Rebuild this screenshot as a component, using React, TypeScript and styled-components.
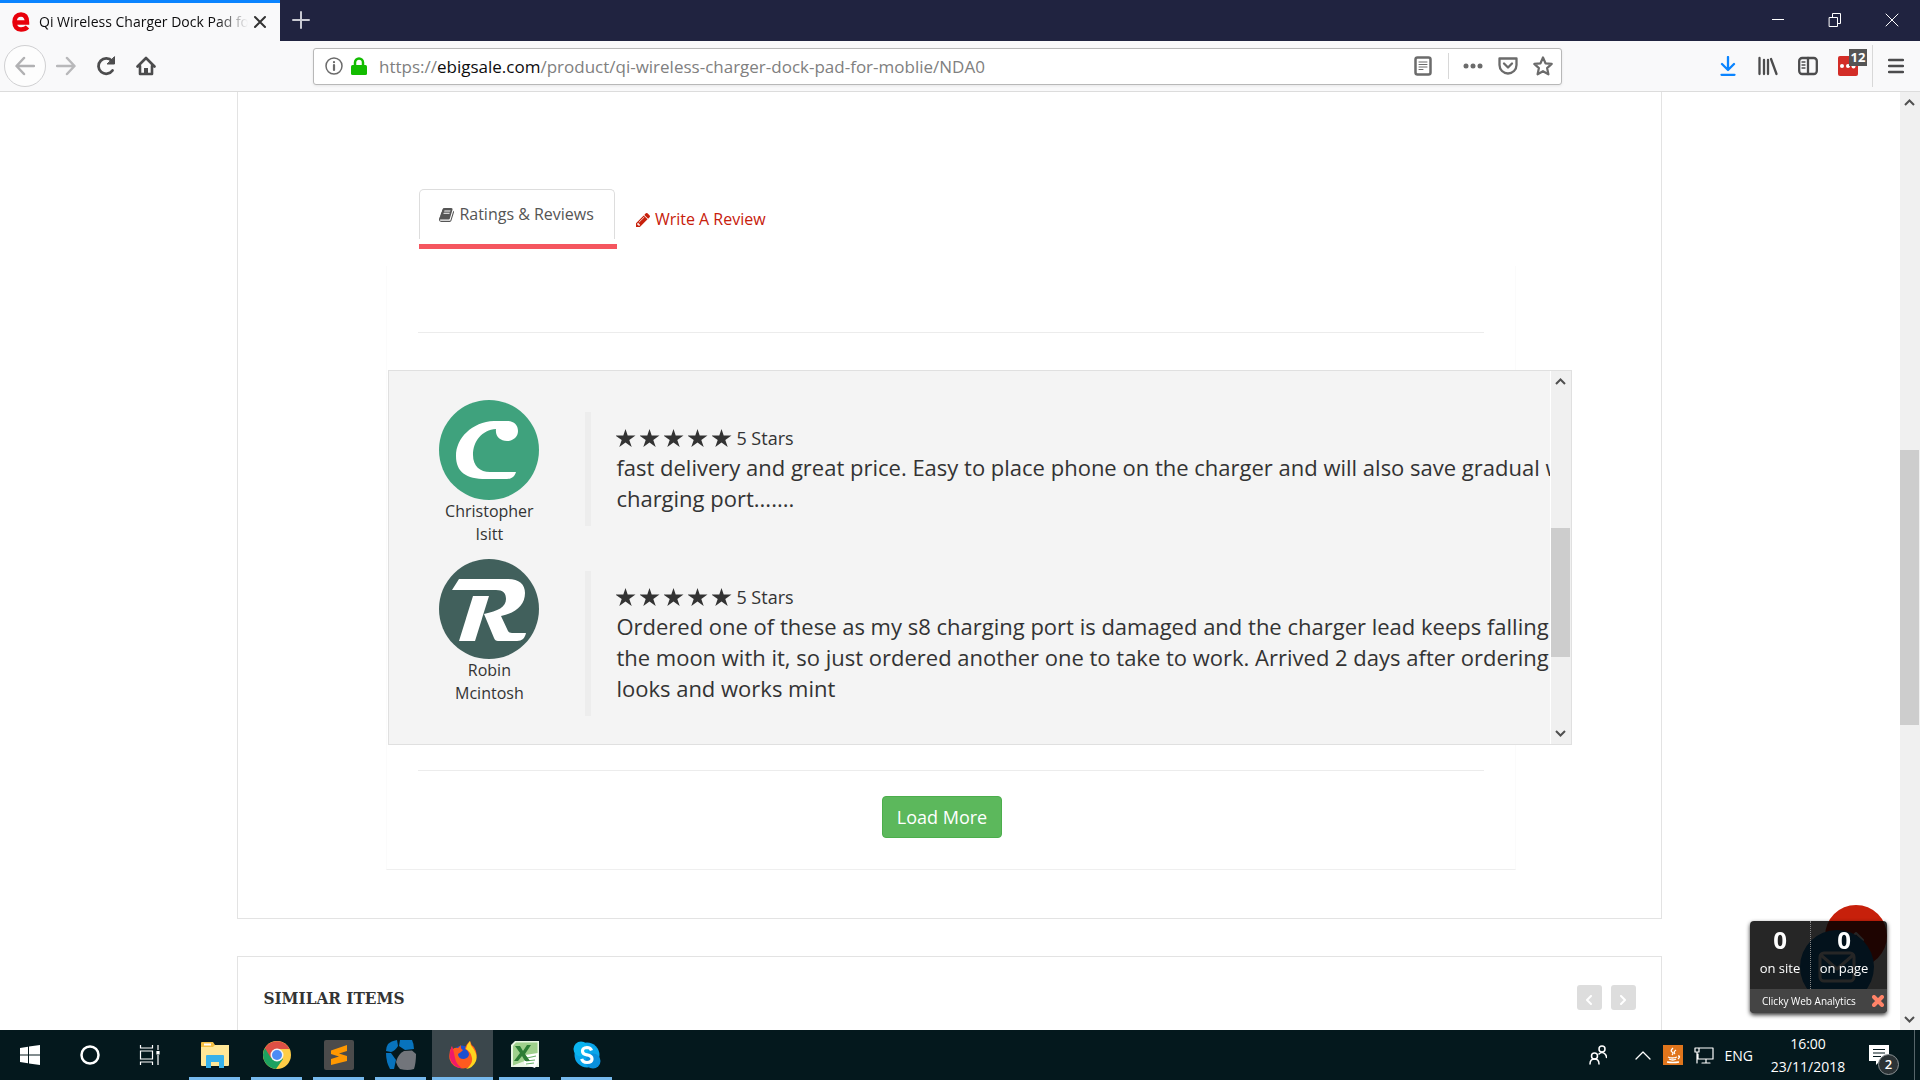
import React from "react";
import styled, { createGlobalStyle, css } from "styled-components";

const ui = `"Open Sans", "Noto Sans", sans-serif`;

const GlobalStyle = createGlobalStyle`
  *, *::before, *::after { box-sizing: border-box; }
  body { margin: 0; background: #fff; font-family: ${ui}; color: #333; }
  button, input { font-family: inherit; }
  svg { display: block; flex: none; }
`;

const Desktop = styled.div`
  height: 100vh;
  display: flex;
  flex-direction: column;
  overflow: hidden;
`;

/* ---------- browser chrome ---------- */

const TitleBar = styled.header`
  display: flex;
  align-items: stretch;
  height: 41px;
  flex: none;
  background: #202340;
`;

const BrowserTab = styled.div`
  display: flex;
  align-items: center;
  width: 280px;
  padding: 0 10px 0 12px;
  border-top: 3px solid #0a84ff;
  background: #f9f9fa;
`;

const TabTitle = styled.span`
  flex: 1;
  margin: 0 2px 0 9px;
  overflow: hidden;
  white-space: nowrap;
  font-size: 14px;
  line-height: 24px;
  color: #0c0c0d;
  mask-image: linear-gradient(to right, #000 85%, transparent);
`;

const IconButton = styled.button<{ $w?: number; $h?: number; $ring?: boolean }>`
  display: flex;
  align-items: center;
  justify-content: center;
  flex: none;
  width: ${(p) => p.$w ?? 40}px;
  height: ${(p) => p.$h ?? 40}px;
  padding: 0;
  border: ${(p) => (p.$ring ? "1px solid #d0d0d2" : "0")};
  border-radius: ${(p) => (p.$ring ? "50%" : "0")};
  background: ${(p) => (p.$ring ? "#fdfdfd" : "transparent")};
  color: inherit;
`;

const WindowButtons = styled.div`
  display: flex;
  margin-left: auto;
  color: #fff;
`;

const NavBar = styled.nav`
  display: flex;
  align-items: center;
  height: 51px;
  flex: none;
  padding: 0 1px 0 4px;
  background: #f9f9fa;
  border-bottom: 1px solid #dcdcdc;
  color: #4c4c4d;
`;

const NavGroup = styled.div`
  display: flex;
  align-items: center;
`;

const AddressBar = styled.div`
  display: flex;
  align-items: center;
  flex: 0 1 1249px;
  height: 37px;
  margin-left: 147px;
  padding: 0 2px 0 11px;
  gap: 8px;
  border: 1px solid #b8b8b8;
  border-radius: 3px;
  background: #fff;
  box-shadow: 0 1px 3px rgba(0, 0, 0, 0.08);
  color: #6b6b6b;
`;

const Url = styled.div`
  flex: 1;
  padding: 2px 0 0 4px;
  font-size: 17px;
  line-height: 24px;
  white-space: nowrap;
  color: #808080;
  b { font-weight: 400; color: #0c0c0d; }
`;

const Rule = styled.span<{ $h: number; $before?: number }>`
  width: 1px;
  height: ${(p) => p.$h}px;
  margin-left: ${(p) => p.$before ?? 0}px;
  background: #d8d8d8;
`;

const ToolButtons = styled(NavGroup)`
  margin-left: auto;
`;

const Extension = styled.span`
  position: relative;
  display: flex;
`;

const ExtBadge = styled.span`
  position: absolute;
  top: -7px;
  left: 11px;
  width: 18px;
  height: 17px;
  background: #555;
  color: #fff;
  font-size: 13px;
  font-weight: 700;
  line-height: 17px;
  text-align: center;
`;

/* ---------- page ---------- */

const Viewport = styled.div`
  display: flex;
  flex: 1;
  min-height: 0;
  background: #fff;
`;

const Page = styled.main`
  flex: 1;
  min-width: 0;
  overflow: hidden;
  padding-right: 1px;
`;

const ScrollTrack = styled.div<{ $edge?: boolean }>`
  display: flex;
  flex-direction: column;
  flex: none;
  justify-content: space-between;
  width: ${(p) => (p.$edge ? 21 : 20)}px;
  background: #f0f0f0;
  border-left: ${(p) => (p.$edge ? "1px solid #fff" : "0")};
  color: #505050;
`;

const ScrollThumb = styled.div<{ $h: number; $before: number; $after: number }>`
  flex: 1;
  display: flex;
  flex-direction: column;
  &::before { content: ""; flex: ${(p) => p.$before}; }
  &::after { content: ""; flex: ${(p) => p.$after}; }
  span { height: ${(p) => p.$h}px; margin-right: 1px; background: #cdcdcd; }
`;

const Card = styled.section<{ $first?: boolean }>`
  width: 75%;
  margin: 0 auto 37px;
  border: 1px solid #e3e3e3;
  ${(p) =>
    p.$first
      ? css`
          border-top: 0;
          padding: 97px 145px 48px 148px;
        `
      : css`
          padding: 28px 25px;
          height: 160px;
        `}
`;

const Tabs = styled.div`
  display: flex;
  align-items: flex-start;
  padding-left: 33px;
`;

const ActiveTab = styled.div`
  border-bottom: 5px solid #f5565f;
`;

const TabLink = styled.a<{ $active?: boolean }>`
  display: flex;
  align-items: center;
  gap: 5px;
  font-size: 16px;
  line-height: 23px;
  text-decoration: none;
  color: ${(p) => (p.$active ? "#555" : "#c7200b")};
  ${(p) =>
    p.$active
      ? css`
          height: 50px;
          margin: 0 2px 5px 0;
          padding: 0 20px 0 19px;
          border: 1px solid #ddd;
          border-bottom: 0;
          border-radius: 5px 5px 0 0;
        `
      : css`
          margin: 19px 0 0 19px;
        `}
`;

const Panel = styled.div`
  margin-top: 17px;
  padding-top: 66px;
  border: 1px solid #fbfbfb;
  border-top: 0;
  border-bottom-color: #efefef;
`;

const Line = styled.hr`
  height: 1px;
  margin: 0 31px;
  border: 0;
  background: #ececec;
`;

const ReviewBox = styled.div`
  display: flex;
  height: 375px;
  margin: 37px -57px 25px 1px;
  border: 1px solid #e0e0e0;
  background: #f4f4f4;
`;

const ReviewList = styled.div`
  flex: 1;
  min-width: 0;
  overflow: hidden;
  padding: 29px 0 0 50px;
`;

const Review = styled.article`
  display: flex;
  align-items: flex-start;
  height: 159px;
`;

const Reviewer = styled.div`
  width: 100px;
  flex: none;
  font-size: 16px;
  line-height: 23px;
  text-align: center;
`;

const ReviewBody = styled.div<{ $lines: number }>`
  margin: 12px 0 0 46px;
  padding: 12px 0 0 25px;
  height: ${(p) => 52 + p.$lines * 31}px;
  border-left: 6px solid #ededed;
  white-space: nowrap;
`;

const Rating = styled.div`
  display: flex;
  align-items: center;
  gap: 4px;
  height: 28px;
  font-size: 18px;
  line-height: 26px;
`;

const Stars = styled.span`
  display: flex;
  gap: 4px;
  color: #333;
`;

const ReviewText = styled.p`
  margin: 0;
  font-size: 22px;
  line-height: 31px;
`;

const LoadRow = styled.div`
  display: flex;
  justify-content: center;
  padding: 25px 18px 31px 0;
`;

const LoadMore = styled.button`
  height: 42px;
  padding: 0 14px;
  border: 1px solid #4cae4c;
  border-radius: 4px;
  background: #5cb85c;
  color: #fff;
  font-size: 18px;
  line-height: 26px;
`;

const SimilarHead = styled.div`
  display: flex;
  justify-content: space-between;
  align-items: flex-start;
  h2 {
    margin: 0;
    font: 700 17px/26px "DejaVu Serif Condensed", "DejaVu Serif", serif;
    color: #333;
  }
`;

const Pager = styled.div`
  display: flex;
  gap: 9px;
`;

const PagerButton = styled.button`
  display: flex;
  align-items: center;
  justify-content: center;
  width: 25px;
  height: 25px;
  padding: 4px 0 0;
  border: 0;
  border-radius: 3px;
  background: #ddd;
  color: #fff;
`;

/* ---------- floating widgets ---------- */

const FloatCircle = styled.button<{ $size: number; $right: number; $bottom: number; $color: string }>`
  position: fixed;
  display: flex;
  align-items: center;
  justify-content: center;
  right: ${(p) => p.$right}px;
  bottom: ${(p) => p.$bottom}px;
  width: ${(p) => p.$size}px;
  height: ${(p) => p.$size}px;
  padding: 0;
  border: 0;
  border-radius: 50%;
  background: ${(p) => p.$color};
  color: #fff;
`;

const Clicky = styled.aside`
  position: fixed;
  right: 33px;
  bottom: 67px;
  width: 137px;
  overflow: hidden;
  border-radius: 4px;
  background: rgba(0, 0, 0, 0.85);
  box-shadow: 0 2px 4px rgba(0, 0, 0, 0.8);
  color: #fff;
`;

const Counts = styled.div`
  display: grid;
  grid-template-columns: 60px 1fr;
  height: 68px;
  text-align: center;
`;

const Count = styled.div<{ $divided?: boolean }>`
  padding: 5px ${(p) => (p.$divided ? 10 : 0)}px 0 0;
  border-left: ${(p) => (p.$divided ? "1px dotted #888" : "0")};
  font-size: 13px;
  line-height: 28px;
  white-space: nowrap;
  strong { display: block; font-size: 24px; }
`;

const ClickyFoot = styled.div`
  display: flex;
  align-items: center;
  justify-content: space-between;
  height: 24px;
  padding: 0 3px 0 12px;
  background: #444;
  font-size: 10px;
  line-height: 16px;
  a { color: #fff; text-decoration: none; }
`;

/* ---------- taskbar ---------- */

const Taskbar = styled.footer`
  display: flex;
  flex: none;
  height: 50px;
  background: #04181d;
  color: #fff;
`;

const TaskItem = styled.button<{ $running?: boolean; $active?: boolean }>`
  display: flex;
  align-items: center;
  justify-content: center;
  width: ${(p) => (p.$active ? 61 : p.$running ? 51 : 60)}px;
  margin: 0 ${(p) => (p.$active ? -5 : 0)}px;
  padding: 0;
  border: 0;
  border-bottom: ${(p) => (p.$running ? "3px solid #76b9ed" : "0")};
  background: ${(p) => (p.$active ? "#3b474c" : "transparent")};
  color: #fff;
  svg { margin-top: ${(p) => (p.$running ? 3 : 0)}px; }
`;

const Running = styled.div`
  display: flex;
  gap: 11px;
  padding-left: 9px;
`;

const Tray = styled.div`
  display: flex;
  align-items: center;
  gap: 11px;
  margin-left: auto;
  padding-right: 5px;
  font-size: 14px;
  line-height: 23px;
`;

const Clock = styled.time`
  width: 88px;
  text-align: center;
  white-space: nowrap;
`;

const Notices = styled.button`
  display: flex;
  align-items: center;
  width: 52px;
  height: 50px;
  padding: 0 0 0 6px;
  border: 0;
  border-right: 1px solid #56656a;
  background: transparent;
`;

const NoticeGlyph = styled.span`
  position: relative;
  display: block;
`;

const NoticeCount = styled.span`
  position: absolute;
  top: 9px;
  left: 9px;
  width: 21px;
  height: 21px;
  border: 1px solid #8b9194;
  border-radius: 50%;
  background: #2c3336;
  color: #fff;
  font-size: 13px;
  font-weight: 600;
  line-height: 19px;
  text-align: center;
`;

/* ---------- drawings ---------- */

type StrokeProps = { w?: number; h?: number; box?: string; sw?: number; color?: string; children: React.ReactNode };

const Stroke = ({ w = 20, h = w, box, sw = 2, color = "currentColor", children }: StrokeProps) => (
  <svg width={w} height={h} viewBox={box ?? `0 0 ${w} ${h}`} fill="none" stroke={color} strokeWidth={sw} strokeLinecap="round" strokeLinejoin="round" aria-hidden="true">
    {children}
  </svg>
);

const Chevron = ({ down = false }: { down?: boolean }) => (
  <svg width="20" height="21" viewBox="0 0 20 21" fill="none" stroke="currentColor" strokeWidth="2" aria-hidden="true">
    <path d={down ? "M5 8l4.500 4.500L14 8" : "M5 13l4.500-4.500L14 13"} />
  </svg>
);

const Star = () => (
  <svg width="20" height="18" viewBox="0 0 20 18" fill="currentColor" aria-hidden="true">
    <path d="M9.500 0l2.200 6.600h7.800l-6.200 4.300 2.400 7.100-6.200-4.400-6.200 4.400 2.400-7.100L-.5 6.600h7.800z" />
  </svg>
);

const AvatarC = () => (
  <svg width="100" height="100" viewBox="0 0 100 100" role="img" aria-label="Christopher Isitt">
    <circle cx="50" cy="50" r="50" fill="#3fa27d" />
    <path
      fill="#fff"
      d="M55 21H68C75 21 79 25 79 31C79 37 74 41 68 41C61 41 56 36 57 29C43 30 34 41 34 55C34 66 41 72 51 72H77C76 76 73 79 68 79H47C27 79 17 72 17 56C17 38 33 22 55 21Z"
    />
  </svg>
);

const AvatarR = () => (
  <svg width="100" height="100" viewBox="0 0 100 100" role="img" aria-label="Robin Mcintosh">
    <circle cx="50" cy="50" r="50" fill="#41605c" />
    <path
      fill="#fff"
      d="M20 20H68C80 20 86 25 86 34C86 46 77 54 62 57L69 72Q70 74 73 74H87C86 79 83 82 78 82H59Q56 82 55 79L45 55C59 52 67 48 67 40C67 34 64 31 57 31H13Z"
    />
    <path fill="#fff" d="M34 37H50L36 82H20Z" />
  </svg>
);

const Favicon = () => (
  <svg width="18" height="20" viewBox="0 0 18 20" fill="none" stroke="#e8000b" strokeWidth="4.500" aria-hidden="true">
    <path d="M3 10.500h12C15 5.500 13 2.500 9 2.500S2.500 5.500 2.500 10s2.500 7.500 6.500 7.500c3 0 5-.8 6.500-2.500" />
  </svg>
);

const BookIcon = () => (
  <svg width="15" height="14" viewBox="0 0 1664 1536" fill="#555" aria-hidden="true">
    <path d="M1639 350q40 57 18 129l-275 906q-19 64-76.500 107.500T1183 1536H260q-77 0-148.500-53.500T12 1351q-24-67-2-127 0-4 3-27t4-37q1-8-3-21.500t-3-19.500q2-11 8-21t16.500-23.500T52 1051q23-38 45-91.500t30-91.500q3-10 .5-30t-.5-28q3-11 17-28t17-23q21-36 42-92t25-90q1-9-2.500-32t.5-28q4-13 22-30.500t22-22.500q19-26 42.500-84.500T340 283q1-8-3-25.500t-2-26.500q2-8 9-18t18-23 17-21q8-12 16.500-30.500t15-35 16-36 19.500-32T469.500 12t36-11.500T553 6l-1 3q38-9 51-9h761q74 0 114 56t18 130l-274 906q-36 119-71.500 153.500T1022 1280H153q-27 0-38 15-11 16-1 43 24 70 144 70h923q29 0 56-15.500t35-41.500l300-987q7-22 5-57 38 15 59 43zM575 352q-4 13 2 22.500t20 9.500h608q13 0 25.500-9.500T1247 352l21-64q4-13-2-22.500t-20-9.500H638q-13 0-25.500 9.500T596 288zm-83 256q-4 13 2 22.500t20 9.500h608q13 0 25.500-9.500T1164 608l21-64q4-13-2-22.500t-20-9.500H555q-13 0-25.500 9.500T513 544z" />
  </svg>
);

const PencilIcon = () => (
  <svg width="14" height="14" viewBox="0 0 1515 1515" fill="#c7200b" aria-hidden="true">
    <path d="M363 1387l91-91-235-235-91 91v107h128v128h107zm523-928q0-22-22-22-10 0-17 7l-542 542q-7 7-7 17 0 22 22 22 10 0 17-7l542-542q7-7 7-17zm-54-192l416 416-832 832H0v-416zm683 96q0 53-37 90l-166 166-416-416 166-165q36-38 90-38 53 0 91 38l235 234q37 39 37 91z" />
  </svg>
);

const WindowsLogo = () => (
  <svg width="20" height="20" viewBox="0 0 20 20" fill="#fff" aria-hidden="true">
    <path d="M0 3l8-1.200v7.700H0zM9 1.600L20 0v9.500H9zM0 10.500h8v7.700L0 17zM9 10.500h11V20L9 18.400z" />
  </svg>
);

const TaskView = () => (
  <svg width="22" height="20" viewBox="0 0 22 20" fill="none" stroke="#fff" strokeWidth="1.200" aria-hidden="true">
    <path d="M1.500 0v3h12V0M1.500 20v-3h12v3M1.500 6h12v8h-12zM19 0v5M19 10v10" />
    <path d="M18 6.500h2v2.500h-2z" fill="#fff" />
  </svg>
);

const FolderIcon = () => (
  <svg width="28" height="26" viewBox="0 0 28 26" aria-hidden="true">
    <path d="M0 1q0-1 1-1h11l2 3h13q1 0 1 1v19H0z" fill="#f5c044" />
    <path d="M0 5h12l2-2h14v20q0 1-1 1H1q-1 0-1-1z" fill="#ffe797" />
    <path d="M3 1.500h7v2H3z" fill="#fff" />
    <path d="M5 14q0-1 1-1h16q1 0 1 1v12h-5v-6h-8v6H5z" fill="#37b1ea" />
  </svg>
);

const ChromeIcon = () => (
  <svg width="28" height="28" viewBox="0 0 28 28" aria-hidden="true">
    <circle cx="14" cy="14" r="14" fill="#ffcd46" />
    <path d="M14 14L1.900 7A14 14 0 0 0 13 28l7-10z" fill="#1da15f" />
    <path d="M1.900 7A14 14 0 0 1 26.500 8H14l-6 9z" fill="#dd5045" />
    <circle cx="14" cy="14" r="6.500" fill="#f4f4f4" />
    <circle cx="14" cy="14" r="5" fill="#4b8bf5" />
  </svg>
);

const SublimeIcon = () => (
  <svg width="30" height="30" viewBox="0 0 30 30" aria-hidden="true">
    <rect width="30" height="30" rx="2" fill="#4b4b4b" />
    <path d="M7 10.500L23 5v6l-8 2.500 8 2.500v5L7 25v-6l8-2.500L7 14z" fill="#ff9800" />
  </svg>
);

const BlueAppIcon = () => (
  <svg width="30" height="30" viewBox="0 0 30 30" aria-hidden="true">
    <path d="M2 4q3-3 9-4l1 6q-3 5-7 6l-5-1q0-4 2-7z" fill="#0873bd" />
    <path d="M14 0q7-1 12 0 2 4 2 9l-9 1-6-4z" fill="#0873bd" />
    <path d="M0 13l5 0 5 7-2 9H4q-4-7-4-16z" fill="#0873bd" />
    <path d="M18 11l8-.5 4 3.500q0 9-2 15-6 2-14 0-3-3-4-7 2-8 8-11z" fill="#72757b" />
  </svg>
);

const FirefoxIcon = () => (
  <svg width="28" height="28" viewBox="0 0 28 28" aria-hidden="true">
    <circle cx="13" cy="14" r="9.500" fill="#1e4fd0" />
    <path d="M3 5q0 2 1 3 2-2 5-1l3-3q-1 4 2 5l-2 2-3 2q0 5 6 5 5-1 5-5-1-4-4-5 1-5 5-8 1 4 4 6 4 6 2 12-3 9-13 9.500Q3 27 .5 18-.5 11 3 5z" fill="#ff5a1f" />
    <path d="M17 8q1-5 4-8 0 4 3 7 5 7 3 13-3 7-10 8 7-5 6-11-1-6-6-9z" fill="#ffd51e" />
    <path d="M3 5q-4 8-1 15 4 7 11 7.500Q7 23 6 17 5 11 3 5z" fill="#f0196a" />
  </svg>
);

const ExcelIcon = () => (
  <svg width="28" height="28" viewBox="0 0 28 28" aria-hidden="true">
    <path d="M4 0h24v26H0V4z" fill="#e9f5e4" />
    <path d="M5 1.500h21.500V15L2 24.500V5z" fill="#9fd08c" />
    <path d="M14 14l13-2v9l-3 6-11-4z" fill="#fff" />
    <path d="M16 17l9-2M15 20l9-1M15 23l8-1" stroke="#69b168" strokeWidth="1.200" />
    <path d="M4 5h5l3 5 4-6h4l-6 9 5 7h-5l-3-5-4 5H3l6-8z" fill="#2d7d35" />
  </svg>
);

const SkypeIcon = () => (
  <svg width="28" height="28" viewBox="0 0 28 28" aria-hidden="true">
    <circle cx="14" cy="14" r="12.500" fill="#0aa5ea" />
    <circle cx="8" cy="8" r="7.500" fill="#0ab4f0" />
    <circle cx="20" cy="20" r="7.500" fill="#0a8fdc" />
    <path d="M18.500 9.500Q17.500 6.500 14 6.500 9.500 6.700 9.500 10T14 13.900q5 .8 5 4T14 21.500q-4.500-.2-5.300-3.600" fill="none" stroke="#fff" strokeWidth="3.200" />
  </svg>
);

/* ---------- data ---------- */

const reviews = [
  {
    first: "Christopher",
    last: "Isitt",
    avatar: <AvatarC />,
    lines: ["fast delivery and great price. Easy to place phone on the charger and will also save gradual w", "charging port......."],
  },
  {
    first: "Robin",
    last: "Mcintosh",
    avatar: <AvatarR />,
    lines: [
      "Ordered one of these as my s8 charging port is damaged and the charger lead keeps falling",
      "the moon with it, so just ordered another one to take to work. Arrived 2 days after ordering",
      "looks and works mint",
    ],
  },
];

const apps = [
  { name: "File Explorer", icon: <FolderIcon /> },
  { name: "Chrome", icon: <ChromeIcon /> },
  { name: "Sublime Text", icon: <SublimeIcon /> },
  { name: "Workbench", icon: <BlueAppIcon /> },
  { name: "Firefox", icon: <FirefoxIcon />, active: true },
  { name: "Excel", icon: <ExcelIcon /> },
  { name: "Skype", icon: <SkypeIcon /> },
];

const Chrome = () => (
  <>
    <TitleBar>
      <BrowserTab>
        <Favicon />
        <TabTitle>Qi Wireless Charger Dock Pad for</TabTitle>
        <IconButton $w={20} $h={24} aria-label="Close tab">
          <Stroke w={14}><path d="M2 2l10 10M12 2L2 12" /></Stroke>
        </IconButton>
      </BrowserTab>
      <IconButton $w={42} aria-label="New tab">
        <Stroke w={18} color="#c9cad3"><path d="M9 1v16M1 9h16" /></Stroke>
      </IconButton>
      <WindowButtons>
        <IconButton $w={58} aria-label="Minimize">
          <Stroke w={12} sw={1}><path d="M0 5.500h12" /></Stroke>
        </IconButton>
        <IconButton $w={56} aria-label="Restore">
          <Stroke w={14} sw={1}><path d="M1.500 4.500h8V13.500h-8zM4.500 4.500V.5h8V10.500H9.500" /></Stroke>
        </IconButton>
        <IconButton $w={57} aria-label="Close window">
          <Stroke w={14} sw={1}><path d="M1 1l12 12M13 1L1 13" /></Stroke>
        </IconButton>
      </WindowButtons>
    </TitleBar>
    <NavBar>
      <NavGroup>
        <IconButton $w={42} $h={42} $ring aria-label="Back">
          <Stroke w={20} sw={2.5} color="#b1b1b3"><path d="M19 10H2M9 2L1.500 10 9 18" /></Stroke>
        </IconButton>
        <IconButton aria-label="Forward">
          <Stroke w={20} sw={2.5} color="#b8b8ba"><path d="M1 10h17M11 2l7.500 8L11 18" /></Stroke>
        </IconButton>
        <IconButton aria-label="Reload">
          <Stroke w={20} sw={2.8}><path d="M16.500 14.500A7.700 7.700 0 1 1 16 5" /><path d="M18.500 1v7h-7z" fill="currentColor" strokeWidth="1" /></Stroke>
        </IconButton>
        <IconButton aria-label="Home">
          <Stroke w={20} sw={2.6}><path d="M1.500 10.500L10 2l8.500 8.500M4 10v8h12v-8" /><path d="M10 12v5" strokeWidth="4" strokeLinecap="butt" /></Stroke>
        </IconButton>
      </NavGroup>
      <AddressBar>
        <Stroke w={18} sw={1.5}><circle cx="9" cy="9" r="8" /><path d="M9 8v5M9 5v.2" strokeWidth="2.200" /></Stroke>
        <svg width="16" height="18" viewBox="0 0 16 18" aria-hidden="true">
          <path d="M4 9V5.500a4 4 0 0 1 8 0V9" fill="none" stroke="#12bc00" strokeWidth="2.500" />
          <rect y="8" width="16" height="10" rx="1.500" fill="#12bc00" />
        </svg>
        <Url>https://<b>ebigsale.com</b>/product/qi-wireless-charger-dock-pad-for-moblie/NDA0</Url>
        <IconButton $w={34} $h={30} aria-label="Reader view">
          <Stroke w={18} h={20}><rect x="1.500" y="1.500" width="15" height="17" rx="2" strokeWidth="2.500" /><path d="M5 6h8M5 8.500h8M5 11h8M5 13.500h4" strokeWidth="1" /></Stroke>
        </IconButton>
        <Rule $h={26} />
        <IconButton $w={32} $h={30} aria-label="Page actions">
          <svg width="20" height="6" viewBox="0 0 20 6" fill="currentColor"><circle cx="3" cy="3" r="2.500" /><circle cx="10" cy="3" r="2.500" /><circle cx="17" cy="3" r="2.500" /></svg>
        </IconButton>
        <IconButton $w={22} $h={30} aria-label="Save to Pocket">
          <Stroke w={20} sw={2.3}><path d="M1.500 2.500h17v6.500a8.500 8.500 0 0 1-17 0z" /><path d="M6 7.500l4 4 4-4" /></Stroke>
        </IconButton>
        <IconButton $w={32} $h={30} aria-label="Bookmark">
          <Stroke w={20} sw={2.2}><path d="M10 1.500l2.500 5.800 6.200.6-4.600 4.200 1.300 6.200L10 15.200l-5.400 3.100 1.300-6.200L1.300 7.900l6.200-.6z" /></Stroke>
        </IconButton>
      </AddressBar>
      <ToolButtons>
        <IconButton aria-label="Downloads">
          <Stroke w={16} h={20} sw={2.3} color="#0a84ff"><path d="M8 1v12M2 8l6 6 6-6M1.500 18.800h13" /></Stroke>
        </IconButton>
        <IconButton aria-label="Library">
          <Stroke w={20} sw={2.3}><path d="M1.500 2v16M6 4v14M10 4v14M13 3l5.500 15" /></Stroke>
        </IconButton>
        <IconButton aria-label="Sidebars">
          <Stroke w={20} sw={2.3}><rect x="1.200" y="2" width="17.600" height="16" rx="3" /><path d="M10 2v16" /><path d="M4 6h3M4 9h3M4 12h3" strokeWidth="1.300" /></Stroke>
        </IconButton>
        <IconButton aria-label="Extension">
          <Extension>
            <svg width="20" height="20" viewBox="0 0 20 20"><rect width="20" height="20" rx="2" fill="#d32d27" /><circle cx="4" cy="10" r="2" fill="#fff" /><circle cx="10" cy="10" r="2" fill="#fff" /><circle cx="15.500" cy="10.500" r="2" fill="#fff" /></svg>
            <ExtBadge>12</ExtBadge>
          </Extension>
        </IconButton>
        <Rule $h={42} $before={4} />
        <IconButton $w={46} aria-label="Menu">
          <Stroke w={16} h={16} sw={2.3}><path d="M1 2h14M1 8h14M1 14h14" /></Stroke>
        </IconButton>
      </ToolButtons>
    </NavBar>
  </>
);

const ReviewsCard = () => (
  <Card $first>
    <Tabs>
      <ActiveTab>
        <TabLink href="#reviews" $active><BookIcon />Ratings &amp; Reviews</TabLink>
      </ActiveTab>
      <TabLink href="#write"><PencilIcon />Write A Review</TabLink>
    </Tabs>
    <Panel>
      <Line />
      <ReviewBox>
        <ReviewList>
          {reviews.map((r) => (
            <Review key={r.first}>
              <Reviewer>
                {r.avatar}
                <div>{r.first}</div>
                <div>{r.last}</div>
              </Reviewer>
              <ReviewBody $lines={r.lines.length}>
                <Rating>
                  <Stars>{[1, 2, 3, 4, 5].map((n) => <Star key={n} />)}</Stars>
                  5 Stars
                </Rating>
                <ReviewText>
                  {r.lines.map((line, i) => (
                    <React.Fragment key={i}>{i > 0 && <br />}{line}</React.Fragment>
                  ))}
                </ReviewText>
              </ReviewBody>
            </Review>
          ))}
        </ReviewList>
        <ScrollTrack $edge>
          <Chevron />
          <ScrollThumb $h={129} $before={136} $after={66}><span /></ScrollThumb>
          <Chevron down />
        </ScrollTrack>
      </ReviewBox>
      <Line />
      <LoadRow><LoadMore>Load More</LoadMore></LoadRow>
    </Panel>
  </Card>
);

const SimilarCard = () => (
  <Card>
    <SimilarHead>
      <h2>SIMILAR ITEMS</h2>
      <Pager>
        <PagerButton aria-label="Previous"><Stroke w={8} h={10}><path d="M6 1L2 5l4 4" /></Stroke></PagerButton>
        <PagerButton aria-label="Next"><Stroke w={8} h={10}><path d="M2 1l4 4-4 4" /></Stroke></PagerButton>
      </Pager>
    </SimilarHead>
  </Card>
);

const Widgets = () => (
  <>
    <FloatCircle $size={62} $right={33} $bottom={113} $color="#c7200b" aria-label="Back to top">
      <Stroke w={16} h={10}><path d="M1 9l7-7 7 7" /></Stroke>
    </FloatCircle>
    <FloatCircle $size={74} $right={46} $bottom={76} $color="#1477b8" aria-label="Contact us">
      <Stroke w={38} h={32} sw={3}><rect x="2" y="2" width="34" height="28" rx="4" /><path d="M4 5l15 13L34 5" /></Stroke>
    </FloatCircle>
    <Clicky>
      <Counts>
        <Count><strong>0</strong>on site</Count>
        <Count $divided><strong>0</strong>on page</Count>
      </Counts>
      <ClickyFoot>
        <a href="#clicky">Clicky Web Analytics</a>
        <Stroke w={12} sw={4} color="#ff8368"><path d="M2 2l8 8M10 2l-8 8" /></Stroke>
      </ClickyFoot>
    </Clicky>
  </>
);

const SystemTaskbar = () => (
  <Taskbar>
    <TaskItem aria-label="Start"><WindowsLogo /></TaskItem>
    <TaskItem aria-label="Search"><Stroke w={20} sw={2.5}><circle cx="10" cy="10" r="8.500" /></Stroke></TaskItem>
    <TaskItem aria-label="Task view"><TaskView /></TaskItem>
    <Running>
      {apps.map((a) => (
        <TaskItem key={a.name} $running $active={a.active} aria-label={a.name}>{a.icon}</TaskItem>
      ))}
    </Running>
    <Tray>
      <IconButton $w={50} aria-label="People">
        <Stroke w={18} h={20} sw={1.5}><circle cx="13" cy="4" r="3" /><circle cx="5.500" cy="11" r="3" /><path d="M1 19q0-5 4.500-5t4.500 5M10 9q3-3 6 0 1.500 1.500 1.500 3.500" /></Stroke>
      </IconButton>
      <IconButton $w={18} aria-label="Show hidden icons"><Stroke w={16} h={9} sw={1.3}><path d="M1 8l7-7 7 7" /></Stroke></IconButton>
      <svg width="20" height="20" viewBox="0 0 20 20" fill="none" stroke="#fff" strokeWidth="1.300" aria-hidden="true">
        <rect width="20" height="20" fill="#e0751c" stroke="none" />
        <path d="M10 3q-3 3-1 4t0 3M13 5q-3 2-1 4M5 12q4 2 9 0M15 11q3 0 0 3M6 14q4 2 7 0M4 17q6 1 12 0" />
      </svg>
      <Stroke w={20} h={17} sw={1.2}><path d="M5 1h14v11H4V7M12 12v4M8 16h8M1 1h4v4H1zM3 5v11" /></Stroke>
      <span>ENG</span>
      <Clock>16:00<br />23/11/2018</Clock>
      <Notices aria-label="Notifications">
        <NoticeGlyph>
          <svg width="20" height="20" viewBox="0 0 20 20" aria-hidden="true">
            <path d="M0 0h20v16h-9l-4 4v-4H0z" fill="#fff" />
            <path d="M4 4.500h12M4 8h12M4 11.500h8" stroke="#04181d" strokeWidth="1.200" />
          </svg>
          <NoticeCount>2</NoticeCount>
        </NoticeGlyph>
      </Notices>
    </Tray>
  </Taskbar>
);

export default function App() {
  return (
    <Desktop>
      <GlobalStyle />
      <Chrome />
      <Viewport>
        <Page>
          <ReviewsCard />
          <SimilarCard />
        </Page>
        <ScrollTrack>
          <Chevron />
          <ScrollThumb $h={275} $before={337} $after={284}><span /></ScrollThumb>
          <Chevron down />
        </ScrollTrack>
      </Viewport>
      <Widgets />
      <SystemTaskbar />
    </Desktop>
  );
}
